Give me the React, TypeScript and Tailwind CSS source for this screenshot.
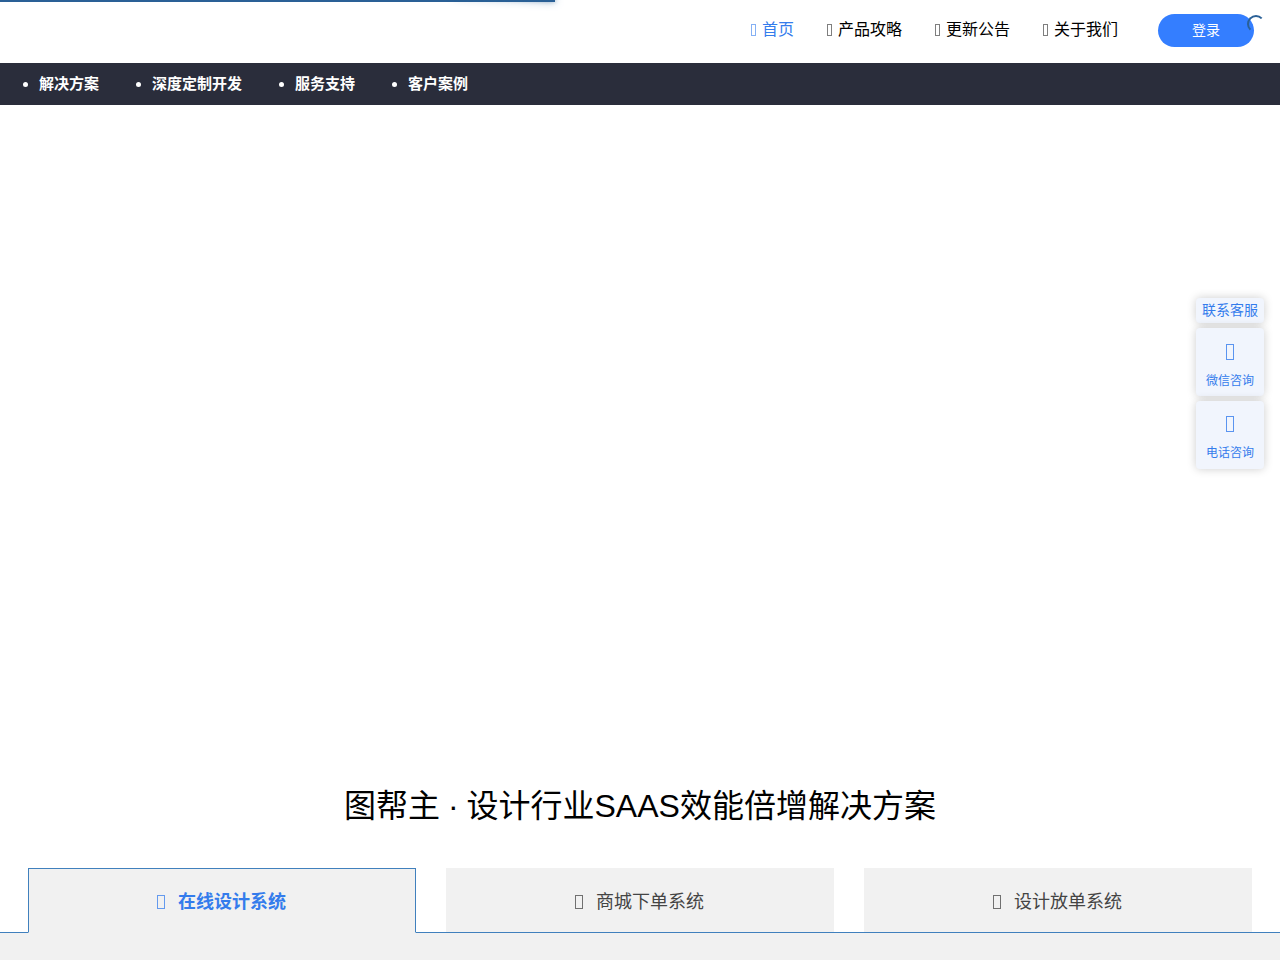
import React from 'react';

interface TofuProps {
  className: string;
}

// Empty box shown in place of an icon font glyph
const Tofu: React.FC<TofuProps> = ({ className }) => (
  <span className={`inline-block shrink-0 border border-current ${className}`} />
);

const navItems = ['首页', '产品攻略', '更新公告', '关于我们'];
const subItems = ['解决方案', '深度定制开发', '服务支持', '客户案例'];
const tabs = ['在线设计系统', '商城下单系统', '设计放单系统'];
const contacts = ['微信咨询', '电话咨询'];

const LoadingBar: React.FC = () => (
  <>
    <div className="absolute left-0 top-0 z-20 h-0.5 w-[555px] overflow-visible bg-[#2a6096]">
      <div className="absolute right-0 top-0 h-full w-[100px] -translate-y-1 rotate-3 shadow-[0_0_10px_#2a6096,0_0_5px_#2a6096]" />
    </div>
    <div className="absolute right-[15px] top-[15px] z-20 size-[18px] rounded-full border-2 border-transparent border-l-[#2a6096] border-t-[#2a6096]" />
  </>
);

const Header: React.FC = () => (
  <header className="flex h-[63px] items-start justify-end bg-white pr-[26px]">
    <nav className="mr-10 flex gap-8 pt-[18px]">
      {navItems.map((item, i) => (
        <a
          key={item}
          className={`flex items-center gap-1.5 text-base leading-6 ${i === 0 ? 'text-[#347cec]' : 'text-black'}`}
        >
          <Tofu className={`mb-px ml-px h-3 w-[5px] ${i === 0 ? 'opacity-60' : 'opacity-50'}`} />
          {item}
        </a>
      ))}
    </nav>
    <button className="mt-3.5 h-[33px] w-24 rounded-full bg-[#347eff] pb-px text-sm text-white">登录</button>
  </header>
);

const ContactPanel: React.FC = () => (
  <aside className="absolute right-4 top-[298px] z-10 flex w-[68px] flex-col gap-[5px] text-[#347cec]">
    <div className="h-[25px] rounded bg-[#f1f5fd] text-center text-sm leading-[25px] shadow-[0_0_10px_rgba(0,0,0,0.2)]">
      联系客服
    </div>
    {contacts.map((item, i) => (
      <div
        key={item}
        className={`flex h-[68px] flex-col items-center rounded bg-[#f1f5fd] shadow-[0_0_10px_rgba(0,0,0,0.2)] ${i === 0 ? 'pt-4' : 'pt-[15px]'}`}
      >
        <Tofu className="h-4 w-2 opacity-80" />
        <span className="mt-3 text-xs leading-[18px]">{item}</span>
      </div>
    ))}
  </aside>
);

const App: React.FC = () => {
  return (
    <div className="relative flex h-[960px] w-[1280px] flex-col overflow-hidden bg-white font-['Liberation_Sans','Noto_Sans_CJK_SC',sans-serif]">
      <LoadingBar />
      <Header />
      <ul className="flex h-[42px] shrink-0 gap-[37px] bg-[#2a2d3b] pl-[23px] text-[15px] font-bold leading-[42px] text-white">
        {subItems.map((item) => (
          <li key={item} className="flex items-center gap-[11px]">
            <span className="size-[5px] rounded-full bg-white" />
            {item}
          </li>
        ))}
      </ul>
      <ContactPanel />
      <main className="flex grow flex-col justify-end">
        <h1 className="mb-[38px] text-center text-[32px] leading-12 text-black [word-spacing:-1px]">
          图帮主 · 设计行业SAAS效能倍增解决方案
        </h1>
        <div className="flex h-[65px] border-b border-[#4080bd] px-7">
          <div className="flex grow gap-[30px]">
            {tabs.map((tab, i) => (
              <div
                key={tab}
                className={`flex flex-1 items-center justify-center gap-[13px] border bg-[#f1f1f1] pt-0.5 text-lg ${
                  i === 0
                    ? '-mb-px border-[#4080bd] border-b-[#f1f1f1] font-bold text-[#347cec]'
                    : 'border-[#f1f1f1] border-b-0 text-[#444]'
                }`}
              >
                <Tofu className="-ml-px mt-px h-3.5 w-2 opacity-75" />
                {tab}
              </div>
            ))}
          </div>
        </div>
        <div className="h-[27px] bg-[#f1f1f1]" />
      </main>
    </div>
  );
};

export default App;
